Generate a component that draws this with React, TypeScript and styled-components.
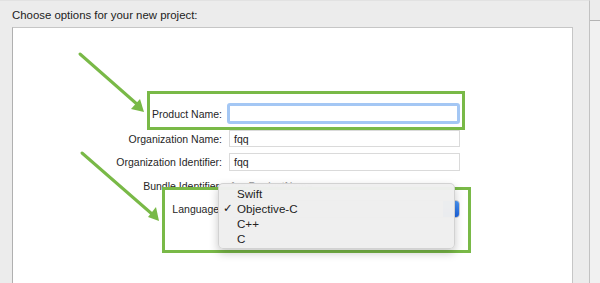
import React from "react";
import styled, { createGlobalStyle } from "styled-components";

const GREEN = "#79b947";

const GlobalStyle = createGlobalStyle`
  html, body { margin: 0; padding: 0; background: #ececec; }
  body { font-family: "Liberation Sans", Arial, sans-serif; color: #222; }
  * { box-sizing: border-box; }
`;

const Page = styled.div`
  position: relative;
  display: flex;
  width: 600px;
  height: 283px;
  overflow: hidden;
  background: #ececec;
`;

const Window = styled.div`
  width: 590px;
  display: flex;
  flex-direction: column;
  border-right: 1px solid #c2c2c2;
  box-shadow: 2px 0 4px rgba(0, 0, 0, 0.08);
  background: #ececec;
  border-top: 1px solid #e2e2e2;
`;

const Header = styled.div`
  height: 26px;
  padding: 2px 0 0 12px;
  display: flex;
  align-items: center;
  font-size: 11.4px;
  color: #222;
`;

const Panel = styled.div`
  flex: 1;
  margin: 0 16px 0 12px;
  background: #fff;
  border: 1px solid #c6c6c6;
  border-left-color: #b0b0b0;
  border-bottom: none;
  padding-top: 75px;
`;

const Form = styled.div`
  display: grid;
  grid-template-columns: 122px 231px;
  grid-template-rows: 21px 17px 18px 17px 18px;
  column-gap: 7px;
  row-gap: 6px;
  margin-left: 87px;
`;

const Label = styled.div`
  align-self: center;
  text-align: right;
  font-size: 10.5px;
  color: #262626;
  white-space: nowrap;
`;

const Field = styled.div<{ $focused?: boolean }>`
  display: flex;
  align-items: center;
  background: #fff;
  font-size: 10.5px;
  color: #222;
  padding-left: ${(p) => (p.$focused ? "2px" : "4px")};
  border: ${(p) => (p.$focused ? "3px solid #a4c7f4" : "1px solid #dadada")};
  margin-left: ${(p) => (p.$focused ? "-2px" : "0")};
  border-radius: ${(p) => (p.$focused ? "3px" : "0")};
`;

const Value = styled.div`
  align-self: center;
  font-size: 10.5px;
  color: #9a9a9a;
  padding-left: 2px;
`;

const Popup = styled.div`
  display: flex;
  justify-content: flex-end;
  background: #fff;
  border: 1px solid #d0d0d0;
  border-radius: 4px;
  overflow: hidden;
`;

const PopupCap = styled.div`
  width: 16px;
  background: linear-gradient(#4a98f8, #1c64e2);
`;

const Edge = styled.div`
  flex: 1;
  display: flex;
  flex-direction: column;
  background: #f1f1f1;
`;

const EdgeTop = styled.div`
  height: 21px;
  background: #ececec;
  border-bottom: 1px solid #b4b4b4;
`;

const Highlight = styled.div<{ $x: number; $y: number; $w: number; $h: number }>`
  position: absolute;
  left: ${(p) => p.$x}px;
  top: ${(p) => p.$y}px;
  width: ${(p) => p.$w}px;
  height: ${(p) => p.$h}px;
  border: 3px solid ${GREEN};
  z-index: 1;
`;

const Menu = styled.div`
  position: absolute;
  left: 218px;
  top: 183px;
  width: 237px;
  height: 66px;
  padding-top: 2px;
  background: rgba(239, 239, 239, 0.98);
  border: 1px solid rgba(0, 0, 0, 0.12);
  border-radius: 5px;
  box-shadow: 0 4px 10px rgba(0, 0, 0, 0.22);
  z-index: 2;
  display: flex;
  flex-direction: column;
`;

const MenuItem = styled.div`
  height: 15px;
  display: flex;
  align-items: center;
  font-size: 11.6px;
  color: #222;
`;

const Check = styled.span`
  width: 18px;
  padding-left: 4px;
  font-family: "DejaVu Sans", sans-serif;
  font-size: 11.5px;
  line-height: 1;
`;

const Arrows = styled.svg`
  position: absolute;
  left: 0;
  top: 0;
  z-index: 3;
  pointer-events: none;
`;

export default function App() {
  return (
    <>
      <GlobalStyle />
      <Page>
        <Window>
          <Header>Choose options for your new project:</Header>
          <Panel>
            <Form>
              <Label>Product Name:</Label>
              <Field $focused />
              <Label>Organization Name:</Label>
              <Field>fqq</Field>
              <Label>Organization Identifier:</Label>
              <Field>fqq</Field>
              <Label>Bundle Identifier:</Label>
              <Value>fqq.ProductName</Value>
              <Label>Language:</Label>
              <Popup>
                <PopupCap />
              </Popup>
            </Form>
          </Panel>
        </Window>
        <Edge>
          <EdgeTop />
        </Edge>

        <Highlight $x={147} $y={91} $w={318} $h={39} />
        <Highlight $x={162} $y={187} $w={309} $h={66} />

        <Menu>
          <MenuItem>
            <Check />
            Swift
          </MenuItem>
          <MenuItem>
            <Check>✓</Check>
            Objective-C
          </MenuItem>
          <MenuItem>
            <Check />
            C++
          </MenuItem>
          <MenuItem>
            <Check />
            C
          </MenuItem>
        </Menu>

        <Arrows width="600" height="283" viewBox="0 0 600 283">
          <line x1="80" y1="54" x2="138" y2="105" stroke={GREEN} strokeWidth="3" strokeLinecap="round" />
          <polygon points="131,109 140,99 144,112" fill={GREEN} />
          <line x1="82" y1="153" x2="152" y2="214" stroke={GREEN} strokeWidth="3" strokeLinecap="round" />
          <polygon points="148,217 156,207 159,221" fill={GREEN} />
        </Arrows>
      </Page>
    </>
  );
}
